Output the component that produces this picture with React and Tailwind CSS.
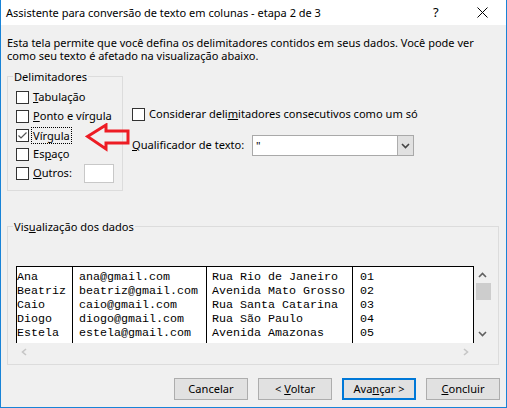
import React from "react";

const rows = [
  ["Ana", "ana@gmail.com", "Rua Rio de Janeiro", "01"],
  ["Beatriz", "beatriz@gmail.com", "Avenida Mato Grosso", "02"],
  ["Caio", "caio@gmail.com", "Rua Santa Catarina", "03"],
  ["Diogo", "diogo@gmail.com", "Rua São Paulo", "04"],
  ["Estela", "estela@gmail.com", "Avenida Amazonas", "05"],
];

const CheckBox = ({ checked }) => (
  <span className="w-[13px] h-[13px] border border-[#333333] bg-white flex items-center justify-center shrink-0">
    {checked && (
      <svg width="11" height="11" viewBox="0 0 11 11">
        <path d="M1.5 5.5 L4 8 L9.5 2.5" stroke="#555555" strokeWidth="1.2" fill="none" />
      </svg>
    )}
  </span>
);

const Option = ({ children, checked }) => (
  <div className="h-[19px] flex items-center gap-[4px]">
    <CheckBox checked={checked} />
    {children}
  </div>
);

const Chevron = ({ up, color = "#606060" }) => (
  <svg width="9" height="6" viewBox="0 0 9 6">
    <path d={up ? "M1 5 L4.5 1.5 L8 5" : "M1 1 L4.5 4.5 L8 1"} stroke={color} strokeWidth="1.6" fill="none" />
  </svg>
);

const Button = ({ children, primary }) => (
  <button
    className={`w-[74px] h-[22px] bg-[#e1e1e1] text-black flex items-center justify-center whitespace-pre ${
      primary ? "border-2 border-[#0078d7]" : "border border-[#adadad]"
    }`}
  >
    <span>{children}</span>
  </button>
);

export default function App() {
  return (
    <div className="relative w-[507px] h-[408px] bg-[#f0f0f0] border-x border-b border-[#1883d7] flex flex-col text-[11.1px] text-black whitespace-nowrap font-['Noto_Sans',sans-serif]">
      {/* title bar */}
      <div className="h-[25px] bg-white flex items-center pl-[5px] shrink-0">
        <span className="flex-1 leading-[14px] text-[11px]">Assistente para conversão de texto em colunas - etapa 2 de 3</span>
        <span className="w-[10px] text-[13px] mr-[34px]">?</span>
        <svg width="11" height="11" viewBox="0 0 11 11" className="mr-[18px]">
          <path d="M0.5 0.5 L10.5 10.5 M10.5 0.5 L0.5 10.5" stroke="#000" strokeWidth="1" />
        </svg>
      </div>

      <div className="px-[6px]">
        <p className="mt-[11px] leading-[13px] text-[11px]">
          Esta tela permite que você defina os delimitadores contidos em seus dados. Você pode ver
          <br />
          como seu texto é afetado na visualização abaixo.
        </p>

        <div className="flex mt-[8px]">
          <fieldset className="w-[116px] border border-[#dcdcdc] pl-[8px] pb-[7px]">
            <legend className="-ml-[3px] px-px leading-[13px]">Delimitadores</legend>
            <div className="mt-[5px]">
              <Option>
                <span><u>T</u>abulação</span>
              </Option>
              <Option>
                <span><u>P</u>onto e vírgula</span>
              </Option>
              <Option checked>
                <span className="border border-dotted border-black px-px -ml-[2px] leading-[15px]">
                  Vír<u>g</u>ula
                </span>
              </Option>
              <Option>
                <span>Es<u>p</u>aço</span>
              </Option>
              <div className="h-[19px] flex items-center gap-[4px]">
                <CheckBox />
                <span className="w-[47px]"><u>O</u>utros:</span>
                <span className="w-[30px] h-[19px] bg-white border border-[#c8c8c8]" />
              </div>
            </div>
          </fieldset>

          <div className="ml-[9px] pt-[35px]">
            <div className="h-[19px] flex items-center gap-[4px]">
              <CheckBox />
              <span>Considerar deli<u>m</u>itadores consecutivos como um só</span>
            </div>
            <div className="mt-[11px] h-[21px] flex items-center">
              <span className="w-[120px]"><u>Q</u>ualificador de texto:</span>
              <div className="w-[162px] h-[21px] border border-[#a9a9a9] bg-white flex">
                <span className="flex-1 pl-[3px] leading-[19px]">"</span>
                <span className="w-[16px] h-full bg-[#e1e1e1] border-l border-[#adadad] flex items-center justify-center">
                  <Chevron color="#444444" />
                </span>
              </div>
            </div>
          </div>
        </div>

        <fieldset className="w-[492px] mt-[29px] border border-[#dcdcdc] pl-[8px] pr-[7px] pb-[4px]">
          <legend className="-ml-[3px] px-px leading-[13px]">
            Vis<u>u</u>alização dos dados
          </legend>
          <div className="flex mt-[33px]">
            <div className="w-[458px] flex flex-col">
              <div className="h-[77px] bg-white border-t border-x border-black flex overflow-hidden font-['Liberation_Mono',monospace] text-[11.67px] leading-[14px]">
                {[0, 1, 2, 3].map((c) => (
                  <div
                    key={c}
                    className={`pt-[3px] whitespace-pre ${
                      c === 0
                        ? "w-[55px]"
                        : c === 1
                        ? "w-[134px] border-l border-black pl-[6px]"
                        : c === 2
                        ? "w-[146px] border-l border-black pl-[5px]"
                        : "flex-1 border-l border-black pl-[7px]"
                    }`}
                  >
                    {rows.map((r) => (
                      <div key={r[0]}>{r[c]}</div>
                    ))}
                  </div>
                ))}
              </div>
              <div className="h-[17px] flex items-center justify-between px-[5px]">
                <svg width="6" height="8" viewBox="0 0 6 8">
                  <path d="M5 1 L1.5 4 L5 7" stroke="#c6c6c6" strokeWidth="1.6" fill="none" />
                </svg>
                <svg width="6" height="8" viewBox="0 0 6 8">
                  <path d="M1 1 L4.5 4 L1 7" stroke="#c6c6c6" strokeWidth="1.6" fill="none" />
                </svg>
              </div>
            </div>
            <div className="w-[17px] h-[77px] flex flex-col items-center">
              <div className="h-[17px] flex items-center justify-center">
                <Chevron up />
              </div>
              <div className="w-[15px] h-[17px] bg-[#cdcdcd] ml-[1px]" />
              <div className="flex-1" />
              <div className="h-[17px] flex items-center justify-center mb-[1px]">
                <Chevron />
              </div>
            </div>
          </div>
        </fieldset>
      </div>

      <div className="flex justify-end gap-[10px] pr-[6px] mt-[13px]">
        <Button>Cancelar</Button>
        <Button>{"< "}<u>V</u>oltar</Button>
        <Button primary>Ava<u>n</u>çar &gt;</Button>
        <Button><u>C</u>oncluir</Button>
      </div>

      {/* red annotation arrow */}
      <svg className="absolute left-[84px] top-[123px]" width="46" height="29" viewBox="0 0 46 29">
        <path
          d="M2.5 13.5 L21 2 L21 8 L43 8 L43 20 L21 20 L21 26 Z"
          stroke="#ed1c24"
          strokeWidth="3"
          fill="none"
          strokeLinejoin="miter"
        />
      </svg>
    </div>
  );
}
